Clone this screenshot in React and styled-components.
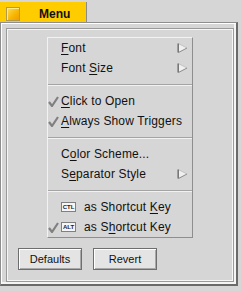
import React from "react";
import styled, { createGlobalStyle } from "styled-components";

const Global = createGlobalStyle`
  html, body { margin: 0; padding: 0; background: #d6d6d6; }
  body { font-family: "Liberation Sans", Arial, sans-serif; color: #111; }
`;

const Window = styled.div`
  width: 241px;
  height: 291px;
  overflow: hidden;
  background: #d6d6d6;
`;

const TabBar = styled.div`
  display: flex;
  height: 22px;
`;

const Tab = styled.div`
  box-sizing: border-box;
  width: 87px;
  height: 20px;
  margin-top: 2px;
  padding: 4px 0 0 6px;
  display: flex;
  align-items: center;
  background: #ffcc00;
  border-right: 1px solid #8c8c8c;
`;

const TabIcon = styled.div`
  box-sizing: border-box;
  width: 14px;
  height: 14px;
  border: 1px solid #b39a4a;
  box-shadow: inset 1px 1px 0 #ffeb8a;
  background: linear-gradient(135deg, #ffdc55 0%, #f7b500 60%, #ef9d00 100%);
`;

const TabLabel = styled.span`
  margin-left: 19px;
  font-size: 12px;
  font-weight: bold;
  line-height: 14px;
  color: #111;
`;

const Panel = styled.div`
  box-sizing: border-box;
  width: 238px;
  height: 264px;
  padding: 5px 2px 2px 5px;
  border-top: 1px solid #8e8e8e;
  border-left: 1px solid #8e8e8e;
  border-right: 2px solid #6a6a6a;
  border-bottom: 2px solid #6a6a6a;
  box-shadow: inset 1px 1px 0 #ffffff, inset -2px -2px 0 #f4f4f4;
`;

const Groove = styled.div`
  box-sizing: border-box;
  width: 228px;
  height: 254px;
  border: 1px solid #9a9a9a;
  box-shadow: inset 0 0 0 1px #f6f6f6;
  display: flex;
  flex-direction: column;
  align-items: flex-start;
`;

const MenuBox = styled.div`
  box-sizing: border-box;
  width: 146px;
  height: 201px;
  margin: 8px 0 0 40px;
  border-top: 1px solid #f2f2f2;
  border-left: 1px solid #f2f2f2;
  border-right: 1px solid #8e8e8e;
  border-bottom: 1px solid #8e8e8e;
  display: flex;
  flex-direction: column;
`;

const Row = styled.div`
  height: 20px;
  display: flex;
  align-items: center;
  padding-right: 4px;
  font-size: 12px;
  letter-spacing: 0.15px;
  line-height: 14px;
  color: #111;
  white-space: nowrap;
`;

const CheckSlot = styled.div`
  width: 13px;
  height: 20px;
  display: flex;
  align-items: center;
  flex: none;
`;

const Label = styled.span`
  u { text-decoration: underline; text-underline-offset: 2px; }
`;

const ArrowSlot = styled.div`
  margin-left: auto;
  width: 11px;
  height: 10px;
  display: flex;
`;

const Separator = styled.div`
  height: 0;
  margin: 6px 0 5px;
  border-top: 1px solid #a4a4a4;
  border-bottom: 1px solid #f2f2f2;
`;

const KeyCap = styled.span`
  box-sizing: border-box;
  width: 15px;
  height: 10px;
  margin-right: 8px;
  display: inline-flex;
  align-items: center;
  justify-content: center;
  background: #f6f6f6;
  border: 1px solid #808080;
  font-size: 6px;
  font-weight: bold;
  line-height: 6px;
  color: #222;
  letter-spacing: 0;
`;

const ButtonRow = styled.div`
  display: flex;
  gap: 11px;
  margin: 10px 0 0 11px;
`;

const Button = styled.button`
  box-sizing: border-box;
  width: 64px;
  height: 22px;
  padding: 0;
  margin: 0;
  background: #e4e4e4;
  border: 1px solid #6e6e6e;
  box-shadow: inset 1px 1px 0 #ffffff, inset -1px -1px 0 #a8a8a8;
  font-family: "Liberation Sans", Arial, sans-serif;
  font-size: 11px;
  color: #111;
`;

const Check = () => (
  <svg width="11" height="11" viewBox="0 0 11 11">
    <path d="M1 6 L4 10 L10 1" fill="none" stroke="#808080" strokeWidth="2.2" />
  </svg>
);

const Arrow = () => (
  <svg width="11" height="10" viewBox="0 0 11 10">
    <polygon points="1,1 10,5 1,9" fill="#f0f0f0" />
    <line x1="1.5" y1="0.5" x2="10" y2="5" stroke="#c4c4c4" strokeWidth="1" />
    <line x1="1.5" y1="9.5" x2="10" y2="5" stroke="#8c8c8c" strokeWidth="1" />
    <line x1="1.2" y1="0.5" x2="1.2" y2="9.5" stroke="#777" strokeWidth="1.6" />
  </svg>
);

const Item = ({ checked, arrow, keyCap, children }) => (
  <Row>
    <CheckSlot>{checked && <Check />}</CheckSlot>
    {keyCap && <KeyCap>{keyCap}</KeyCap>}
    <Label>{children}</Label>
    {arrow && (
      <ArrowSlot>
        <Arrow />
      </ArrowSlot>
    )}
  </Row>
);

export default function App() {
  return (
    <Window>
      <Global />
      <TabBar>
        <Tab>
          <TabIcon />
          <TabLabel>Menu</TabLabel>
        </Tab>
      </TabBar>
      <Panel>
        <Groove>
          <MenuBox>
            <Item arrow><u>F</u>ont</Item>
            <Item arrow>Font <u>S</u>ize</Item>
            <Separator />
            <Item checked><u>C</u>lick to Open</Item>
            <Item checked><u>A</u>lways Show Triggers</Item>
            <Separator />
            <Item>C<u>o</u>lor Scheme...</Item>
            <Item arrow>S<u>e</u>parator Style</Item>
            <Separator />
            <Item keyCap="CTL">as Shortcut <u>K</u>ey</Item>
            <Item checked keyCap="ALT">as S<u>h</u>ortcut Key</Item>
          </MenuBox>
          <ButtonRow>
            <Button>Defaults</Button>
            <Button>Revert</Button>
          </ButtonRow>
        </Groove>
      </Panel>
    </Window>
  );
}
